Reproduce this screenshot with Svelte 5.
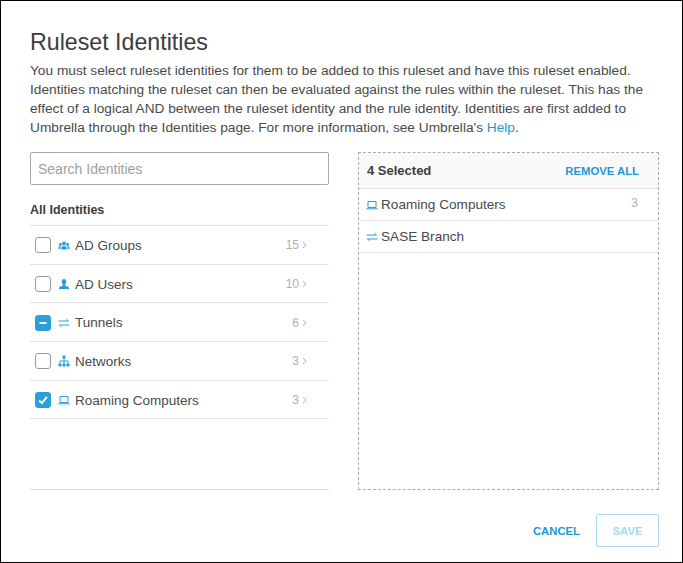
<script lang="ts">
  const identities = [
    { name: 'AD Groups', count: 15, icon: 'groups', state: 'off' },
    { name: 'AD Users', count: 10, icon: 'user', state: 'off' },
    { name: 'Tunnels', count: 6, icon: 'tunnel', state: 'partial' },
    { name: 'Networks', count: 3, icon: 'network', state: 'off' },
    { name: 'Roaming Computers', count: 3, icon: 'laptop', state: 'on' }
  ];

  const selected = [
    { name: 'Roaming Computers', count: 3, icon: 'laptop' },
    { name: 'SASE Branch', count: null, icon: 'tunnel' }
  ];
</script>

{#snippet icon(kind)}
  <svg class="icon" viewBox="0 0 12 12" aria-hidden="true">
    {#if kind === 'groups'}
      <circle cx="6" cy="4.500" r="1.900" />
      <path d="M3 10.500c0-2.400 1.200-3.400 3-3.400s3 1 3 3.400z" />
      <circle cx="2.400" cy="5.500" r="1.400" />
      <circle cx="9.600" cy="5.500" r="1.400" />
      <path d="M0.300 10c0-2 .8-3 2-3 .3 0 .5 0 .7.1-.5.8-.8 1.800-.8 2.900zM11.700 10c0-2-.8-3-2-3-.3 0-.5 0-.7.1.5.8.8 1.800.8 2.900z" />
    {:else if kind === 'user'}
      <path d="M6 1c1.500 0 2.300 1.100 2.300 2.600 0 1.200-.5 2.200-1.100 2.800v1l3.300 1.500c.4.2.5.5.5 1V11H1V9.900c0-.5.1-.8.5-1l3.300-1.500v-1C4.200 5.800 3.700 4.800 3.700 3.600 3.700 2.100 4.500 1 6 1z" />
    {:else if kind === 'tunnel'}
      <path class="line" d="M0.500 4h10M8.500 2.300 10.500 4M11.500 8h-10M3.500 9.700 1.500 8" />
    {:else if kind === 'network'}
      <rect x="4.500" y="0.500" width="3" height="3" />
      <rect x="0.500" y="8.500" width="3" height="3" />
      <rect x="4.500" y="8.500" width="3" height="3" />
      <rect x="8.500" y="8.500" width="3" height="3" />
      <path class="line" d="M6 3.500v5M2 8.500V6h8v2.500" />
    {:else}
      <path class="line" d="M2 2.500h8v6H2z" />
      <path class="line" d="M0.300 9.800h11.400" />
    {/if}
  </svg>
{/snippet}

<div class="dialog">
  <h1>Ruleset Identities</h1>
  <p class="intro">
    You must select ruleset identities for them to be added to this ruleset and have this ruleset enabled.
    Identities matching the ruleset can then be evaluated against the rules within the ruleset. This has the
    effect of a logical AND between the ruleset identity and the rule identity. Identities are first added to
    Umbrella through the Identities page. For more information, see Umbrella's <a href="#help">Help</a>.
  </p>

  <div class="columns">
    <section class="left">
      <input class="search" type="text" placeholder="Search Identities" />
      <h2>All Identities</h2>
      <ul class="list">
        {#each identities as item}
          <li>
            <span class="box {item.state}">
              {#if item.state === 'on'}
                <svg viewBox="0 0 16 16" aria-hidden="true"><path d="M3.500 8.500 6.800 11.500 12.500 4.500" /></svg>
              {:else if item.state === 'partial'}
                <svg viewBox="0 0 16 16" aria-hidden="true"><path d="M4 8h8" /></svg>
              {/if}
            </span>
            {@render icon(item.icon)}
            <span class="name">{item.name}</span>
            <span class="count">{item.count}</span>
            <svg class="chevron" viewBox="0 0 5 8" aria-hidden="true"><path d="M1 1l3 3-3 3" /></svg>
          </li>
        {/each}
      </ul>
    </section>

    <section class="right">
      <header>
        <span>4 Selected</span>
        <button type="button" class="link">REMOVE ALL</button>
      </header>
      <ul class="picked">
        {#each selected as item}
          <li>
            {@render icon(item.icon)}
            <span class="name">{item.name}</span>
            {#if item.count}<span class="count">{item.count}</span>{/if}
          </li>
        {/each}
      </ul>
    </section>
  </div>

  <footer>
    <button type="button" class="link">CANCEL</button>
    <button type="button" class="save">SAVE</button>
  </footer>
</div>

<style>
  :global(body) {
    margin: 0;
    background: #fff;
  }

  .dialog {
    box-sizing: border-box;
    width: 683px;
    height: 563px;
    padding: 27px 23px 15px 29px;
    border: 1px solid #000;
    font-family: "Liberation Sans", Arial, sans-serif;
    color: #4a4a4a;
    display: flex;
    flex-direction: column;
  }

  h1 {
    margin: 0;
    font-size: 23.200px;
    line-height: 28px;
    font-weight: 400;
    color: #3c3c3c;
  }

  .intro {
    margin: 5px 0 0;
    font-size: 13.700px;
    line-height: 19px;
    width: 628px;
    color: #4a4a4a;
  }

  .intro a {
    color: #1d9bd8;
    text-decoration: none;
  }

  .columns {
    display: flex;
    gap: 29px;
    margin-top: 15px;
    height: 340px;
  }

  .left {
    width: 299px;
    display: flex;
    flex-direction: column;
    border-bottom: 1px solid #dcdcdc;
  }

  .search {
    box-sizing: border-box;
    width: 100%;
    height: 33px;
    padding: 0 7px;
    border: 1px solid #a9a9a9;
    border-radius: 2px;
    font: 14px "Liberation Sans", Arial, sans-serif;
    outline: none;
  }

  .search::placeholder {
    color: #a0a0a0;
    opacity: 1;
  }

  h2 {
    margin: 18px 0 0;
    font-size: 12.500px;
    line-height: 15px;
    font-weight: 700;
    color: #3c3c3c;
  }

  .list {
    list-style: none;
    margin: 7px 0 0;
    padding: 0;
    border-top: 1px solid #e2e2e2;
  }

  .list li {
    box-sizing: border-box;
    display: flex;
    align-items: center;
    height: 38.700px;
    padding: 1px 0 0 5px;
    border-bottom: 1px solid #e2e2e2;
    font-size: 13.500px;
  }

  .box {
    box-sizing: border-box;
    width: 16px;
    height: 16px;
    border: 1.500px solid #9b9b9b;
    border-radius: 3px;
    margin-right: 7px;
    display: flex;
  }

  .box.on,
  .box.partial {
    background: #2b9fd9;
    border-color: #2b9fd9;
  }

  .box svg {
    width: 100%;
    height: 100%;
  }

  .box path {
    fill: none;
    stroke: #fff;
    stroke-width: 2.200;
  }

  .icon {
    width: 12px;
    height: 12px;
    flex: none;
    fill: #2b9fd9;
  }

  .icon .line {
    fill: none;
    stroke: #2b9fd9;
    stroke-width: 1;
  }

  .name {
    margin-left: 5px;
  }

  .count {
    margin-left: auto;
    font-size: 12px;
    color: #b0b0b0;
  }

  .chevron {
    width: 5px;
    height: 8px;
    margin: 0 22px 0 3px;
    fill: none;
    stroke: #b5b5b5;
    stroke-width: 1;
  }

  .right {
    box-sizing: border-box;
    width: 301px;
    border: 1px dashed #ababab;
  }

  .right header {
    display: flex;
    align-items: center;
    justify-content: space-between;
    height: 35px;
    padding: 0 19px 0 8px;
    background: #fafafa;
    border-bottom: 1px solid #e2e2e2;
    font-size: 13px;
    font-weight: 700;
    color: #3c3c3c;
  }

  .link {
    padding: 0;
    border: 0;
    background: none;
    font: 700 11.300px "Liberation Sans", Arial, sans-serif;
    color: #1d9bd8;
  }

  .picked {
    list-style: none;
    margin: 0;
    padding: 0;
  }

  .picked li {
    display: flex;
    align-items: center;
    height: 31px;
    padding: 0 20px 0 7px;
    border-bottom: 1px solid #e2e2e2;
    font-size: 13.600px;
  }

  .picked .count {
    margin-top: -3px;
  }

  .picked .name {
    margin-left: 3px;
  }

  footer {
    display: flex;
    justify-content: flex-end;
    align-items: center;
    gap: 16px;
    margin-top: 24px;
  }

  .save {
    box-sizing: border-box;
    width: 63px;
    height: 33px;
    border: 1px solid #a8d8ee;
    border-radius: 2px;
    background: #fff;
    font: 700 11.300px "Liberation Sans", Arial, sans-serif;
    color: #a8d8ee;
  }
</style>
